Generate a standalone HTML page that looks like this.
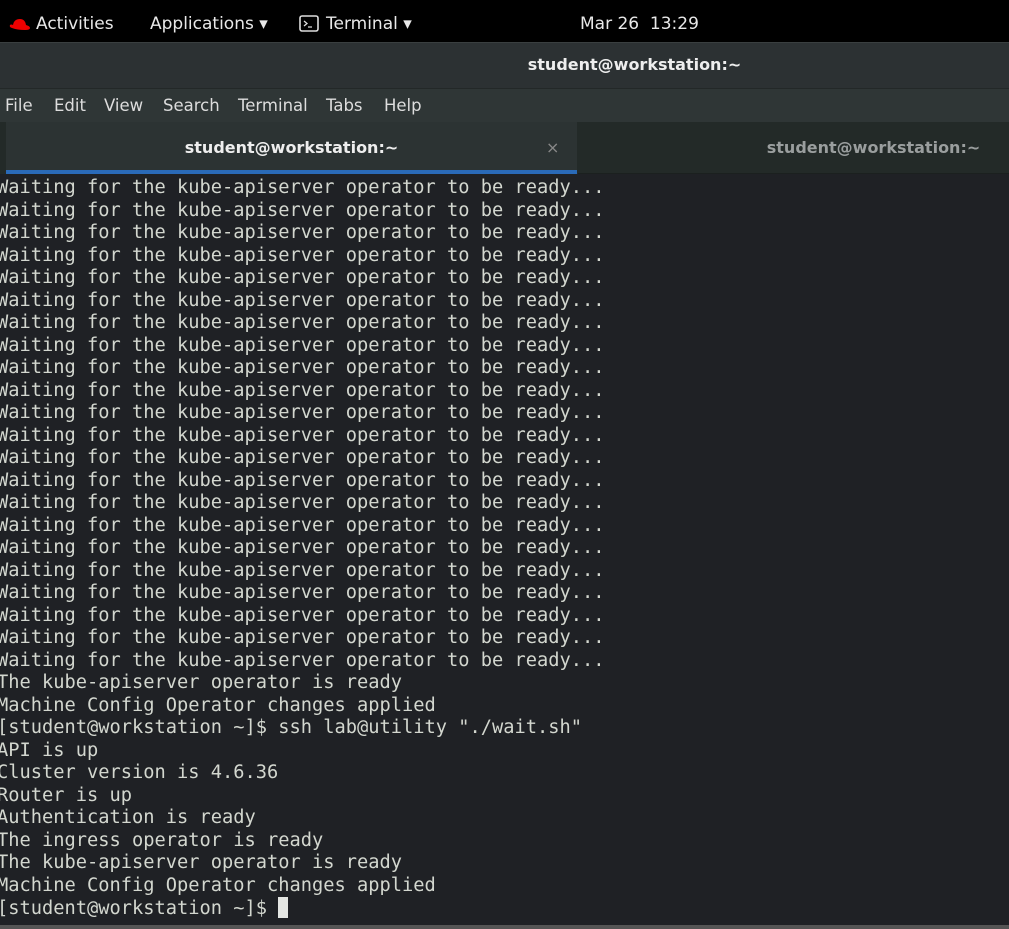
<!DOCTYPE html>
<html><head><meta charset="utf-8"><style>
*{margin:0;padding:0;box-sizing:border-box}
body{width:1009px;height:929px;overflow:hidden;background:#1f2125;position:relative;font-family:"DejaVu Sans","Liberation Sans",sans-serif}
#top{position:absolute;left:0;top:0;width:1009px;height:42px;background:#000;color:#e8e8e8;font-size:17px}
#top span{position:absolute;top:14px}
#title{position:absolute;top:42px;left:0;width:1009px;height:46px;background:#2c3133;border-top:1px solid #3a3f40;color:#eee;font-size:16px;font-weight:bold;text-align:center;line-height:44px;padding-left:260px}
#menu{position:absolute;top:88px;left:0;width:1009px;height:34px;background:#2f3636;border-top:1px solid #232828;color:#ddd;font-size:16.5px}
#menu span{position:absolute;top:7px}
#tabs{position:absolute;top:122px;left:0;width:1009px;height:52px;background:#232a28}
#tab1{position:absolute;left:6px;top:0;width:571px;height:52px;background:#2c3333;color:#eee;font-weight:bold;font-size:16px;text-align:center;line-height:52px;border-bottom:4px solid #2a6ab8}
#tab2{position:absolute;left:578px;top:0;width:431px;height:52px;color:#9a9e9e;font-weight:bold;font-size:16px;text-align:center;line-height:52px;padding-left:160px;border-bottom:1px solid #1b201f}
#term{position:absolute;left:-3px;top:177px;font-family:"DejaVu Sans Mono","Liberation Mono",monospace;font-size:18.7px;line-height:22.5px;color:#d3d7cf;white-space:pre}
.cur{display:inline-block;width:10px;height:21px;background:#e4e6e3;vertical-align:-4px}
#bot{position:absolute;left:0;top:925px;width:1009px;height:4px;background:#555}
</style></head><body>
<div id="top">
<svg style="position:absolute;left:9px;top:17px" width="22" height="14" viewBox="0 0 22 14"><path d="M4 8 Q5 2 11 2 Q16 2 17 8 Q21 9 21 11 Q21 13 16 13 Q8 13 3 11 Q0 10 1 8 Q2 7 4 8Z" fill="#e00"/></svg>
<span style="left:36px">Activities</span>
<span style="left:150px">Applications ▾</span>
<svg style="position:absolute;left:299px;top:15px" width="20" height="17"><rect x="1" y="1" width="18" height="15" rx="2" fill="none" stroke="#ddd" stroke-width="1.6"/><path d="M5 6l3 2.5-3 2.5M9 12h4" stroke="#ddd" stroke-width="1.3" fill="none"/></svg>
<span style="left:326px">Terminal ▾</span>
<span style="left:580px">Mar 26&nbsp; 13:29</span>
</div>
<div id="title">student@workstation:~</div>
<div id="menu"><span style="left:5px">File</span><span style="left:54px">Edit</span><span style="left:104px">View</span><span style="left:163px">Search</span><span style="left:238px">Terminal</span><span style="left:326px">Tabs</span><span style="left:384px">Help</span></div>
<div id="tabs"><div id="tab1">student@workstation:~<span style="position:absolute;left:540px;top:0;color:#888;font-weight:normal">×</span></div><div id="tab2">student@workstation:~</div></div>
<div id="term">Waiting for the kube-apiserver operator to be ready...
Waiting for the kube-apiserver operator to be ready...
Waiting for the kube-apiserver operator to be ready...
Waiting for the kube-apiserver operator to be ready...
Waiting for the kube-apiserver operator to be ready...
Waiting for the kube-apiserver operator to be ready...
Waiting for the kube-apiserver operator to be ready...
Waiting for the kube-apiserver operator to be ready...
Waiting for the kube-apiserver operator to be ready...
Waiting for the kube-apiserver operator to be ready...
Waiting for the kube-apiserver operator to be ready...
Waiting for the kube-apiserver operator to be ready...
Waiting for the kube-apiserver operator to be ready...
Waiting for the kube-apiserver operator to be ready...
Waiting for the kube-apiserver operator to be ready...
Waiting for the kube-apiserver operator to be ready...
Waiting for the kube-apiserver operator to be ready...
Waiting for the kube-apiserver operator to be ready...
Waiting for the kube-apiserver operator to be ready...
Waiting for the kube-apiserver operator to be ready...
Waiting for the kube-apiserver operator to be ready...
Waiting for the kube-apiserver operator to be ready...
The kube-apiserver operator is ready
Machine Config Operator changes applied
[student@workstation ~]$ ssh lab@utility "./wait.sh"
API is up
Cluster version is 4.6.36
Router is up
Authentication is ready
The ingress operator is ready
The kube-apiserver operator is ready
Machine Config Operator changes applied
[student@workstation ~]$ <span class="cur"></span></div>
<div id="bot"></div>
</body></html>
